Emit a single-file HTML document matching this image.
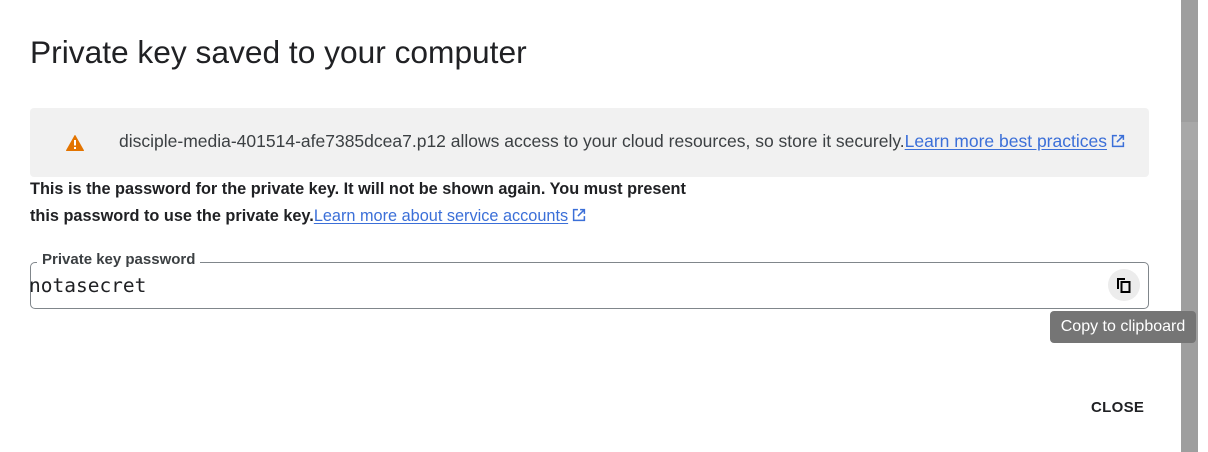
<!DOCTYPE html>
<html><head><meta charset="utf-8"><style>
*{box-sizing:border-box;margin:0;padding:0}
body{width:1208px;height:452px;background:#fff;position:relative;overflow:hidden;font-family:"Liberation Sans",Arial,sans-serif;color:#202124}
.strip{position:absolute;left:1181px;top:0;width:17px;height:452px;background:#9e9e9e}
.strip .b1{position:absolute;left:0;top:122px;width:17px;height:38px;background:#a8a8a8}
.strip .b2{position:absolute;left:0;top:160px;width:17px;height:40px;background:#a4a4a4}
.dlg{position:absolute;left:0;top:0;width:1181px;height:452px;background:#fff;border-top-right-radius:8px}
h1{position:absolute;left:30px;top:34px;font-size:31.7px;font-weight:400;color:#202124}
.warn{position:absolute;left:30px;top:108px;width:1119px;height:69px;background:#f1f1f1;border-radius:4px}
.warn .t{position:absolute;left:89px;top:23px;font-size:17.5px;color:#3c4043;white-space:nowrap}
a{color:#3b6fd8;text-decoration:underline;text-underline-offset:2px}
.ext{display:inline-block;vertical-align:-1px;margin-left:4px}
.p{position:absolute;left:30px;font-size:16.3px;font-weight:700;color:#202124;white-space:nowrap}
.p a{font-weight:400}
.field{position:absolute;left:30px;top:262px;width:1119px;height:47px;border:1px solid #80868b;border-radius:5px}
.lbl{position:absolute;left:37px;top:251px;background:#fff;padding:0 5px;font-size:15px;font-weight:700;color:#3c4043}
.val{position:absolute;left:29px;top:274px;font-family:"DejaVu Sans Mono","Liberation Mono",monospace;font-size:19.5px;color:#202124}
.cb{position:absolute;left:1108px;top:269px;width:32px;height:32px;border-radius:50%;background:#ececec}
.tip{position:absolute;left:1050px;top:311px;width:146px;height:32px;background:#757575;border-radius:4px;color:#fff;font-size:16px;line-height:32px;text-align:center}
.close{position:absolute;left:1091px;top:399px;font-size:15px;font-weight:700;color:#202124;letter-spacing:0.3px}
</style></head><body>
<div class="strip"><div class="b1"></div><div class="b2"></div></div>
<div class="dlg">
<h1>Private key saved to your computer</h1>
<div class="warn">
<svg style="position:absolute;left:36px;top:27px" width="18" height="16" viewBox="0 0 18 16"><path d="M9 0.5L17.5 15.5H0.5Z" fill="#e37400" stroke="#e37400" stroke-linejoin="round"/><rect x="8" y="5" width="2" height="5.5" fill="#fff"/><rect x="8" y="12" width="2" height="2" fill="#fff"/></svg>
<div class="t">disciple-media-401514-afe7385dcea7.p12 allows access to your cloud resources, so store it securely.<a>Learn more best practices</a><svg class="ext" width="14" height="14" viewBox="0 0 13 13"><path d="M5.5 1.5H1.5V11.5H11.5V7.5M7.5 1.5H11.5V5.5M11.5 1.5L5.5 7.5" fill="none" stroke="#3b6fd8" stroke-width="1.4"/></svg></div>
</div>
<div class="p" style="top:180px">This is the password for the private key. It will not be shown again. You must present</div>
<div class="p" style="top:207px">this password to use the private key.<a>Learn more about service accounts</a><svg class="ext" width="14" height="14" viewBox="0 0 13 13"><path d="M5.5 1.5H1.5V11.5H11.5V7.5M7.5 1.5H11.5V5.5M11.5 1.5L5.5 7.5" fill="none" stroke="#3b6fd8" stroke-width="1.4"/></svg></div>
<div class="field"></div>
<div class="lbl">Private key password</div>
<div class="val">notasecret</div>
<div class="cb"><svg style="position:absolute;left:8px;top:8px" width="16" height="16" viewBox="0 0 16 16"><path d="M2 1V12" stroke="#000" stroke-width="2" fill="none"/><path d="M2 2H9" stroke="#000" stroke-width="2"/><rect x="5.5" y="5" width="8" height="10" fill="none" stroke="#000" stroke-width="2"/></svg></div>
<div class="tip">Copy to clipboard</div>
<div class="close">CLOSE</div>
</div>
</body></html>
